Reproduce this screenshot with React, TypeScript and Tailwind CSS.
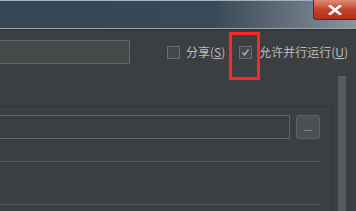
import React from 'react'

const font = { fontFamily: '"Noto Sans CJK SC", "Noto Sans", sans-serif' }

function CheckBox({ checked }: { checked?: boolean }) {
  return (
    <span className="flex h-[13px] w-[13px] shrink-0 items-center justify-center border border-[#6b6b6b] bg-[#43494a]">
      {checked && (
        <svg width="9" height="9" viewBox="0 0 9 9">
          <polyline points="1.5,4.5 3.5,7 7.5,1.5" fill="none" stroke="#a9a9a9" strokeWidth="1.6" />
        </svg>
      )}
    </span>
  )
}

export default function App() {
  return (
    <div className="relative h-[211px] w-[356px] overflow-hidden bg-[#3c3f41] text-[12px] text-[#bbbbbb]" style={font}>
      {/* 타이틀 바 */}
      <div className="flex h-[28px] justify-end border-t border-[#9fb2c4] bg-gradient-to-r from-[#364653] via-[#3a4956] via-60% to-[#8a949c]">
        <div className="flex h-[20px] w-[43px] items-center justify-center rounded-bl-[4px] border-b border-l border-[#5a2a22] bg-gradient-to-b from-[#e08a78] via-[#c4422a] to-[#b0301c] -mt-px">
          <svg width="14" height="10" viewBox="0 0 14 10">
            <path d="M2 1 L12 9 M12 1 L2 9" stroke="#ffffff" strokeWidth="2.6" strokeLinecap="square" />
          </svg>
        </div>
      </div>
      <div className="h-px bg-[#9aa2a9]" />
      <div className="h-px bg-[#2e3133]" />

      {/* 상단 입력 + 체크박스 */}
      <div className="mt-[10px] flex h-[24px] items-center">
        <div className="h-[24px] w-[130px] border border-l-0 border-[#646464] bg-[#45494a]" />
        <div className="ml-[37px] flex items-center gap-[6px]">
          <CheckBox />
          <span>
            分享(<span className="underline">S</span>)
          </span>
        </div>
        <div className="ml-[14px] flex items-center gap-[7px]">
          <CheckBox checked />
          <span>
            允许并行运行(<span className="underline">U</span>)
          </span>
        </div>
      </div>

      {/* 본문 패널 + 스크롤바 */}
      <div className="mt-[12px] flex">
        <div className="w-[333px] pt-[30px]">
          <div className="border-r border-t border-[#323436] pt-[8px] pr-[12px]">
            <div className="flex items-center gap-[6px]">
              <div className="h-[24px] w-[291px] border border-l-0 border-[#646464]" />
              <div className="flex h-[24px] w-[24px] items-center justify-center rounded-[3px] border border-[#5e6060] bg-[#4c5052] text-[10px] leading-none text-[#bbbbbb]">
                ...
              </div>
            </div>
            <div className="mt-[22px] h-px bg-[#555758]" />
            <div className="mt-[42px] h-px bg-[#555758]" />
            <div className="h-[20px]" />
          </div>
        </div>
        <div className="ml-[5px] h-[140px] w-[8px] bg-[#595b5d]" />
      </div>

      {/* 강조 표시 */}
      <div className="absolute left-[229px] top-[32px] h-[48px] w-[31px] border-[3px] border-[#ff2626]" />
    </div>
  )
}
